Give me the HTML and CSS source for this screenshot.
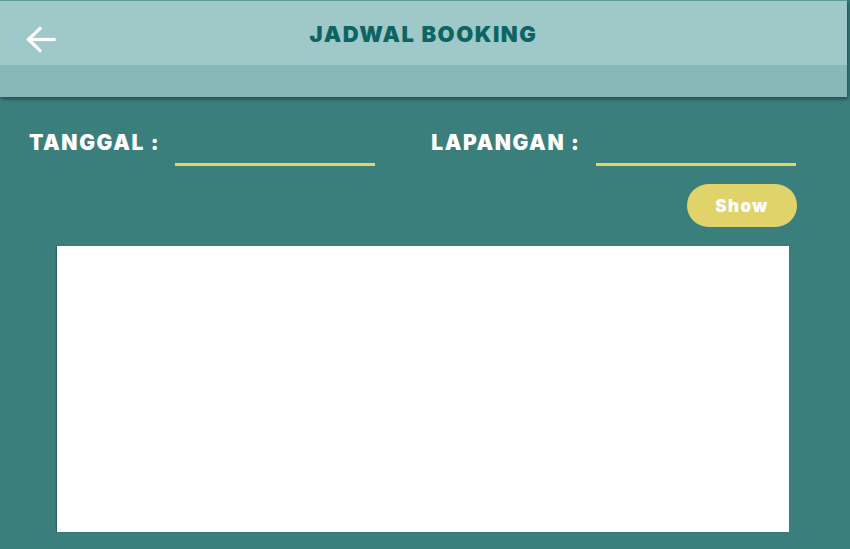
FILE: index.html
```html
<!DOCTYPE html>
<html>
<head>
<meta charset="utf-8">
<link rel="stylesheet" href="styles.css">
</head>
<body>
<header class="topbar">
  <div class="bar-top">
    <div class="back">
      <svg width="32" height="28" viewBox="0 0 32 28" fill="none" stroke="#fff" stroke-width="3.2" stroke-linecap="square">
        <path d="M29 13.5H4"/>
        <path d="M15 2.5L3.5 13.5L15 24.5"/>
      </svg>
    </div>
    <h1 class="title">JADWAL BOOKING</h1>
    <div></div>
  </div>
  <div class="bar-bottom"></div>
</header>
<main class="content">
  <div class="filters">
    <div class="field field-date">
      <span class="label">TANGGAL :</span>
      <div class="line"></div>
    </div>
    <div class="field field-court">
      <span class="label">LAPANGAN :</span>
      <div class="line"></div>
    </div>
  </div>
  <div class="actions">
    <button class="btn-show">Show</button>
  </div>
  <div class="table-area"></div>
</main>
</body>
</html>
```

FILE: styles.css
```css
* { box-sizing: border-box; }
html, body { height: 100%; }
body {
  margin: 0;
  background: #3b7f7d;
  font-family: "Inter", "Open Sans", sans-serif;
  overflow: hidden;
}
.topbar {
  width: 847px;
  border-top: 1px solid #5f9997;
  box-shadow: 1px 2px 4px rgba(0, 0, 0, 0.45);
  position: relative;
  z-index: 1;
}
.bar-top {
  height: 64px;
  background: #9fc8c8;
  display: grid;
  grid-template-columns: 1fr auto 1fr;
  align-items: center;
}
.back {
  padding-left: 25px;
  padding-top: 14px;
  display: flex;
}
.title {
  margin: 0;
  font-size: 22px;
  font-weight: 900;
  letter-spacing: 1.5px;
  color: #0d6462;
  padding-top: 2px;
}
.bar-bottom {
  height: 32px;
  background: #89b8b8;
}
.filters {
  display: flex;
  padding-left: 29px;
  padding-top: 31px;
}
.field {
  display: flex;
  align-items: flex-start;
}
.field-court { margin-left: 56px; }
.label {
  color: #fff;
  font-size: 21px;
  font-weight: 900;
  letter-spacing: 1.6px;
  line-height: 30px;
  white-space: nowrap;
}
.field-date .line { margin-left: 15px; }
.field-court .line { margin-left: 16px; }
.line {
  width: 200px;
  height: 38px;
  border-bottom: 3px solid #e2d46a;
}
.actions {
  display: flex;
  justify-content: flex-end;
  padding-right: 53px;
  margin-top: 18px;
}
.btn-show {
  width: 110px;
  height: 43px;
  border: none;
  border-radius: 22px;
  background: #e0d36a;
  color: #fff;
  font-family: "Inter", "Open Sans", sans-serif;
  font-size: 17px;
  font-weight: 900;
  letter-spacing: 1.4px;
  padding: 0;
}
.table-area {
  margin: 19px 0 0 57px;
  width: 732px;
  height: 286px;
  background: #fff;
  box-shadow: -1px 0 1px rgba(0, 0, 0, 0.25);
}
```
